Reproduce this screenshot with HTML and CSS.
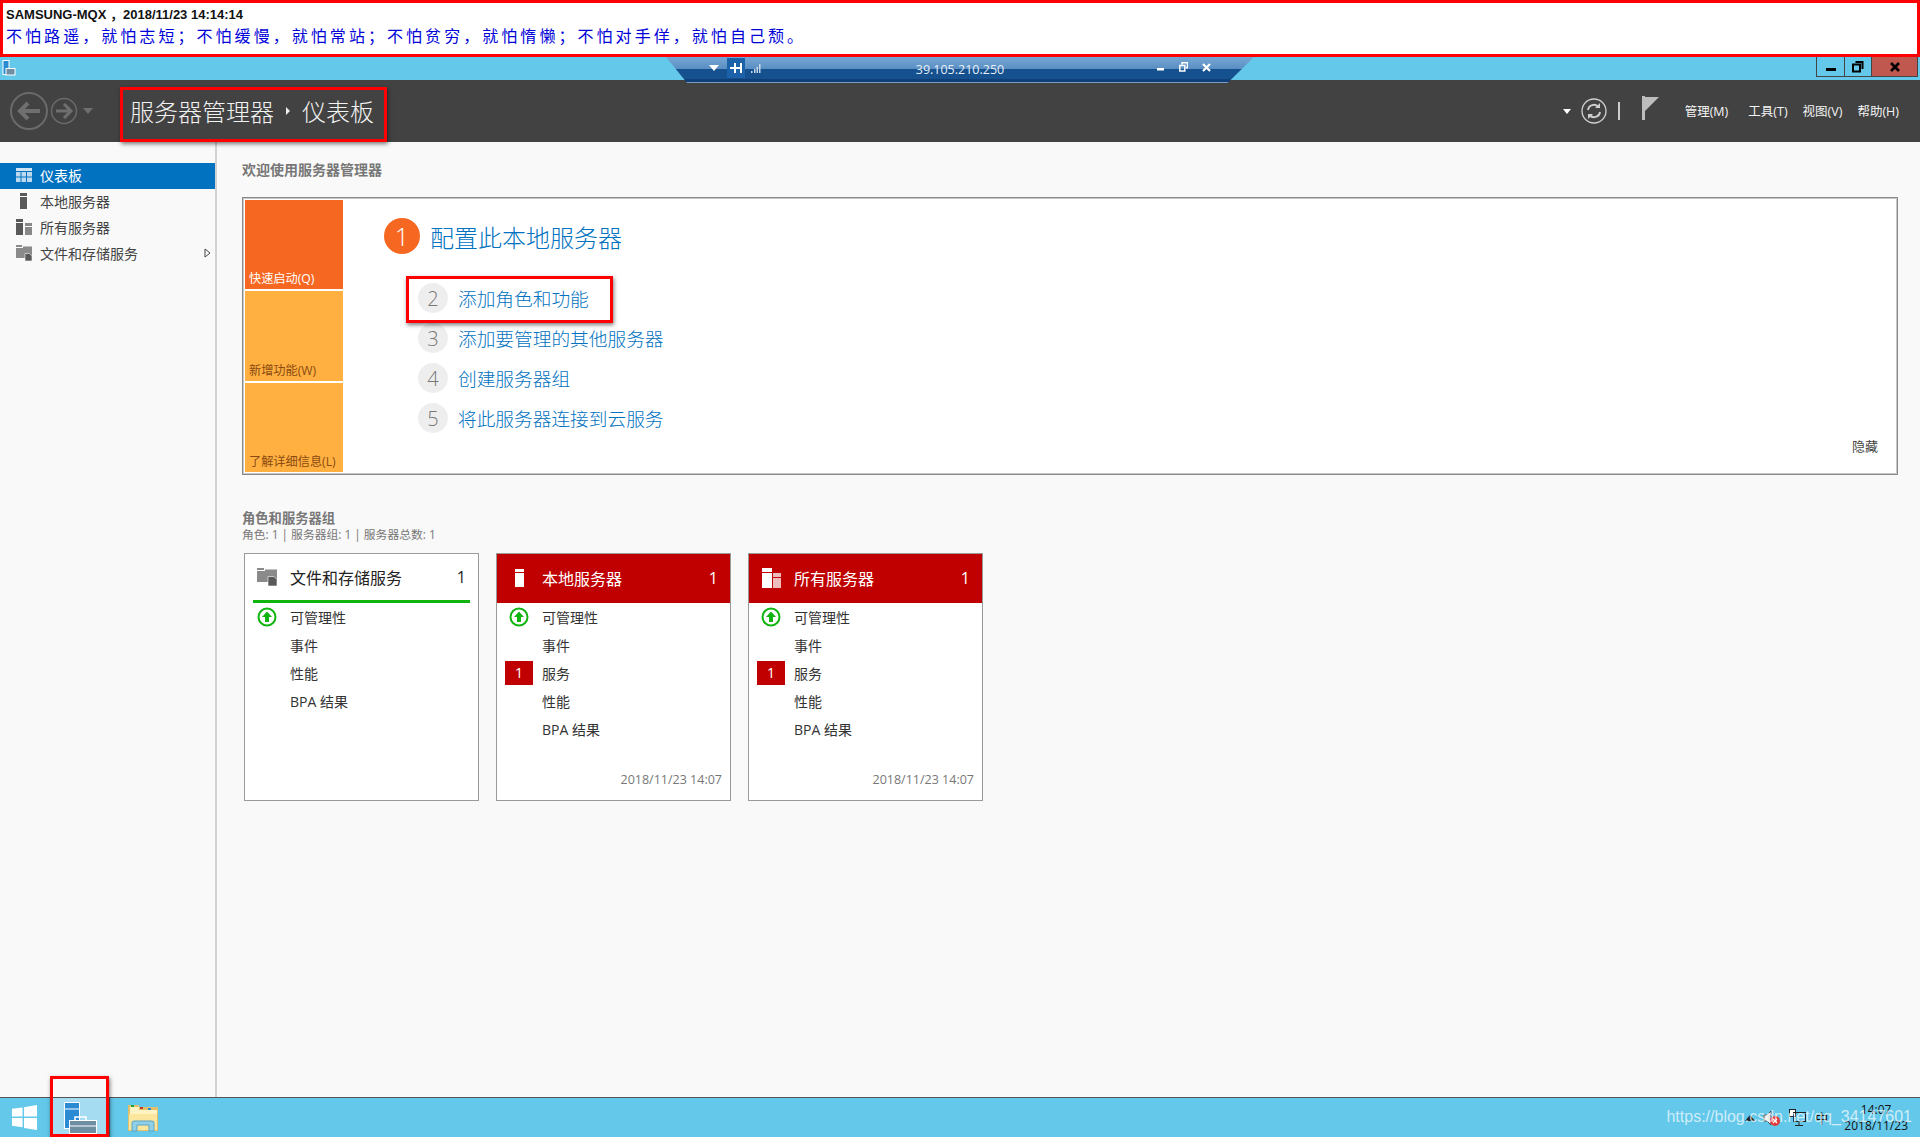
FILE: index.html
```html
<!DOCTYPE html>
<html lang="zh-CN">
<head>
    <meta charset="UTF-8">
    <title>服务器管理器</title>
    <link rel="stylesheet" href="styles.css">
</head>
<body>
    <div class="banner">
        <div class="banner-host">SAMSUNG-MQX ，2018/11/23 14:14:14</div>
        <div class="banner-motto">不怕路遥，就怕志短；不怕缓慢，就怕常站；不怕贫穷，就怕惰懒；不怕对手佯，就怕自己颓。</div>
    </div>

    <div class="titlebar">
        <svg class="app-icon" width="14" height="16" viewBox="0 0 14 16">
            <rect x="1" y="0.5" width="6" height="14" fill="#2a8ad4" stroke="#fff"/>
            <rect x="4" y="8.5" width="9" height="6.500" fill="#6f8ea3" stroke="#fff"/>
        </svg>
        <div class="window-btns">
            <div class="win-btn">
                <svg width="12" height="12" viewBox="0 0 12 12"><rect x="1" y="7" width="10" height="3" fill="#000"/></svg>
            </div>
            <div class="win-btn restore">
                <svg width="12" height="12" viewBox="0 0 12 12"><path d="M3.500 1h7v7M1 3.500h7v7H1z" fill="none" stroke="#000" stroke-width="2"/></svg>
            </div>
            <div class="win-btn close">
                <svg width="12" height="12" viewBox="0 0 12 12"><path d="M2 2l8 8M10 2l-8 8" stroke="#000" stroke-width="2.600"/></svg>
            </div>
        </div>
    </div>

    <div class="header">
        <div class="nav">
            <svg width="90" height="44" viewBox="0 0 90 44">
                <circle cx="19" cy="22" r="18" fill="none" stroke="#6a6a6a" stroke-width="2"/>
                <path d="M30 22H10M18 14l-8 8 8 8" fill="none" stroke="#6f6f6f" stroke-width="4"/>
                <circle cx="54" cy="22" r="12.500" fill="none" stroke="#6a6a6a" stroke-width="1.500"/>
                <path d="M46 22h15M54 15l7 7-7 7" fill="none" stroke="#6f6f6f" stroke-width="3"/>
                <path d="M73 19h10l-5 6z" fill="#6f6f6f"/>
            </svg>
        </div>
        <div class="crumb">
            <span>服务器管理器</span>
            <svg width="6" height="10" viewBox="0 0 6 10"><path d="M1 1l4 4-4 4z" fill="#eee"/></svg>
            <span>仪表板</span>
        </div>
        <div class="header-right">
            <svg width="8" height="5" viewBox="0 0 8 5"><path d="M0 0h8L4 5z" fill="#fff"/></svg>
            <svg class="refresh" width="26" height="26" viewBox="0 0 26 26">
                <circle cx="13" cy="13" r="12" fill="none" stroke="#cfcfcf" stroke-width="1.300"/>
                <path d="M7 12a6 6 0 0 1 10.500-3M19 14a6 6 0 0 1-10.500 3" fill="none" stroke="#cfcfcf" stroke-width="2"/>
                <path d="M19 5v5h-5zM7 21v-5h5z" fill="#cfcfcf"/>
            </svg>
            <div class="sep"></div>
            <svg class="flag" width="18" height="24" viewBox="0 0 18 24">
                <rect x="0" y="0" width="3" height="24" fill="#bdbdbd"/>
                <path d="M3 1h14L3 15z" fill="#bdbdbd"/>
            </svg>
            <div class="menu">
                <span class="menu-first">管理(M)</span>
                <span>工具(T)</span>
                <span>视图(V)</span>
                <span>帮助(H)</span>
            </div>
        </div>
    </div>

    <div class="main">
        <div class="sidebar">
            <div class="side-item active">
                <svg width="16" height="14" viewBox="0 0 16 14">
                    <rect width="16" height="3" fill="#cfe4f5"/>
                    <path d="M0 4h4.500v4.500H0zM5.500 4H10v4.500H5.500zM11 4h5v4.500h-5zM0 9.500h4.500V14H0zM5.500 9.500H10V14H5.500zM11 9.500h5V14h-5z" fill="#bcd9f0"/>
                </svg>
                <span>仪表板</span>
            </div>
            <div class="side-item">
                <svg width="16" height="16" viewBox="0 0 16 16">
                    <rect x="4" y="0" width="7" height="3" fill="#595959"/>
                    <rect x="4" y="4" width="7" height="12" fill="#595959"/>
                </svg>
                <span>本地服务器</span>
            </div>
            <div class="side-item">
                <svg width="16" height="16" viewBox="0 0 16 16">
                    <rect x="0" y="0" width="7" height="3" fill="#595959"/>
                    <rect x="0" y="4" width="7" height="12" fill="#595959"/>
                    <rect x="9" y="4" width="7" height="3" fill="#888"/>
                    <rect x="9" y="8" width="7" height="8" fill="#888"/>
                </svg>
                <span>所有服务器</span>
            </div>
            <div class="side-item">
                <svg width="16" height="16" viewBox="0 0 16 16">
                    <path d="M0 0h6v2H0zM7 1.500h9V13H0V3h7z" fill="#8a8a8a"/>
                    <path d="M9 8.500h4.500L16 11v5H9z" fill="#595959" stroke="#f9f9f9" stroke-width="0.600"/>
                </svg>
                <span>文件和存储服务</span>
                <svg class="side-arrow" width="7" height="10" viewBox="0 0 7 10"><path d="M1 1l5 4-5 4z" fill="#fff" stroke="#444"/></svg>
            </div>
        </div>

        <div class="content">
            <div class="welcome">欢迎使用服务器管理器</div>

            <div class="quick">
                <div class="tiles">
                    <div class="tile tile-start">快速启动(Q)</div>
                    <div class="tile">新增功能(W)</div>
                    <div class="tile">了解详细信息(L)</div>
                </div>
                <div class="steps">
                    <div class="step-head">
                        <div class="num-big">1</div>
                        <div class="step-title">配置此本地服务器</div>
                    </div>
                    <div class="step-list">
                        <div class="step"><div class="num">2</div>添加角色和功能</div>
                        <div class="step"><div class="num">3</div>添加要管理的其他服务器</div>
                        <div class="step"><div class="num">4</div>创建服务器组</div>
                        <div class="step"><div class="num">5</div>将此服务器连接到云服务</div>
                    </div>
                </div>
                <div class="hide-link">隐藏</div>
            </div>

            <div class="groups-title">角色和服务器组</div>
            <div class="groups-sub">角色: 1 | 服务器组: 1 | 服务器总数: 1</div>

            <div class="cards">
                <div class="card">
                    <div class="card-head ok">
                        <svg width="20" height="18" viewBox="0 0 20 18">
                            <path d="M0 0h7v2H0zM8 1.500h12V14H0V3h8z" fill="#8a8a8a"/>
                            <path d="M11 8.500h6l3 3V18h-9z" fill="#595959" stroke="#fff" stroke-width="0.600"/>
                        </svg>
                        <span class="card-name">文件和存储服务</span>
                        <span class="card-count">1</span>
                    </div>
                    <div class="card-body">
                        <div class="row">
                            <svg class="up" width="20" height="20" viewBox="0 0 20 20"><circle cx="10" cy="10" r="8.500" fill="#fff" stroke="#0fb40f" stroke-width="2"/><path d="M10 4.500L15 10h-3v5H8v-5H5z" fill="#0fb40f"/></svg>
                            <span>可管理性</span>
                        </div>
                        <div class="row"><span>事件</span></div>
                        <div class="row"><span>性能</span></div>
                        <div class="row"><span>BPA 结果</span></div>
                    </div>
                </div>

                <div class="card">
                    <div class="card-head alert">
                        <svg width="20" height="18" viewBox="0 0 20 18">
                            <rect x="5" y="0" width="9" height="3" fill="#fff"/>
                            <rect x="5" y="4" width="9" height="14" fill="#fff"/>
                        </svg>
                        <span class="card-name">本地服务器</span>
                        <span class="card-count">1</span>
                    </div>
                    <div class="card-body">
                        <div class="row">
                            <svg class="up" width="20" height="20" viewBox="0 0 20 20"><circle cx="10" cy="10" r="8.500" fill="#fff" stroke="#0fb40f" stroke-width="2"/><path d="M10 4.500L15 10h-3v5H8v-5H5z" fill="#0fb40f"/></svg>
                            <span>可管理性</span>
                        </div>
                        <div class="row"><span>事件</span></div>
                        <div class="row"><div class="flag-num">1</div><span>服务</span></div>
                        <div class="row"><span>性能</span></div>
                        <div class="row"><span>BPA 结果</span></div>
                    </div>
                    <div class="card-time">2018/11/23 14:07</div>
                </div>

                <div class="card">
                    <div class="card-head alert">
                        <svg width="20" height="20" viewBox="0 0 20 20">
                            <rect x="0" y="0" width="10" height="4" fill="#fff"/>
                            <rect x="0" y="5" width="10" height="15" fill="#fff"/>
                            <rect x="11" y="5" width="8" height="4" fill="#eebcbc"/>
                            <rect x="11" y="10" width="8" height="10" fill="#eebcbc"/>
                        </svg>
                        <span class="card-name">所有服务器</span>
                        <span class="card-count">1</span>
                    </div>
                    <div class="card-body">
                        <div class="row">
                            <svg class="up" width="20" height="20" viewBox="0 0 20 20"><circle cx="10" cy="10" r="8.500" fill="#fff" stroke="#0fb40f" stroke-width="2"/><path d="M10 4.500L15 10h-3v5H8v-5H5z" fill="#0fb40f"/></svg>
                            <span>可管理性</span>
                        </div>
                        <div class="row"><span>事件</span></div>
                        <div class="row"><div class="flag-num">1</div><span>服务</span></div>
                        <div class="row"><span>性能</span></div>
                        <div class="row"><span>BPA 结果</span></div>
                    </div>
                    <div class="card-time">2018/11/23 14:07</div>
                </div>
            </div>
        </div>
    </div>

    <div class="taskbar">
        <div class="task-btn start">
            <svg width="27" height="27" viewBox="0 0 28 28">
                <path d="M1 5l11-1.500V13H1zM13.500 3.300L27 1v12H13.500zM1 14.500h11V24L1 22.500zM13.500 14.500H27V27l-13.500-2z" fill="#fff"/>
            </svg>
        </div>
        <div class="task-btn current">
            <svg width="33" height="32" viewBox="0 0 33 32">
                <rect x="0.500" y="0.500" width="15" height="26" fill="#2a8ad4" stroke="#fff"/>
                <path d="M0.500 7h15" stroke="#fff"/>
                <path d="M11 18v-3h11v3" fill="none" stroke="#fff" stroke-width="1.500"/>
                <rect x="5.500" y="18.500" width="27" height="13" fill="#6f8ea3" stroke="#fff"/>
                <path d="M6 24h26" stroke="#fff"/>
            </svg>
        </div>
        <div class="task-btn folder">
            <svg width="32" height="29" viewBox="0 0 32 29">
                <path d="M1 2h11v2h19v24H1z" fill="#e3bf6a"/>
                <path d="M3 4h9v3h18v5H3z" fill="#fff3c4"/>
                <rect x="4" y="2" width="3" height="2" fill="#1aa63c"/>
                <rect x="13" y="4" width="3" height="2" fill="#c0392b"/>
                <rect x="21" y="5" width="3" height="2" fill="#2a8ad4"/>
                <path d="M2 11h28v16H2z" fill="#fbe69d"/>
                <path d="M5 28v-8a2 2 0 0 1 2-2h18a2 2 0 0 1 2 2v8h-5v-6H10v6z" fill="#8fd0e8" stroke="#5aa4c4"/>
            </svg>
        </div>
        <div class="tray">
            <svg width="10" height="6" viewBox="0 0 10 6"><path d="M5 0l5 6H0z" fill="#222"/></svg>
            <svg width="18" height="18" viewBox="0 0 18 18">
                <path d="M1 6h3l4-4v14l-4-4H1z" fill="#e8e8e8" stroke="#333" stroke-width="0.800"/>
                <circle cx="12" cy="12" r="5" fill="#e23a3a"/>
                <path d="M10 10l4 4M14 10l-4 4" stroke="#fff" stroke-width="1.200"/>
            </svg>
            <svg width="18" height="18" viewBox="0 0 18 18">
                <rect x="0.500" y="0.500" width="6" height="7" fill="#fff" stroke="#222"/>
                <rect x="4.500" y="3.500" width="12" height="9" fill="none" stroke="#222"/>
                <path d="M10 13v3M6 16.500h8" stroke="#222"/>
            </svg>
            <span class="tray-ime">中</span>
            <div class="clock">
                <span>14:07</span>
                <span>2018/11/23</span>
            </div>
        </div>
        <div class="watermark">https://blog.csdn.net/qq_34147601</div>
    </div>

    <!-- 远程桌面连接栏 -->
    <div class="rdp-bar">
        <svg width="10" height="6" viewBox="0 0 10 6"><path d="M0 0h10L5 6z" fill="#fff"/></svg>
        <div class="rdp-pin">
            <svg width="12" height="10" viewBox="0 0 12 10"><path d="M0 5h11M5 0v10M11 0v10" stroke="#fff" stroke-width="2"/></svg>
        </div>
        <svg width="10" height="10" viewBox="0 0 10 10"><path d="M0 8h1.500v2H0zM3 6h1.500v4H3zM5.500 4H7v6H5.500zM8 1h1.500v9H8z" fill="#c8d8ea"/></svg>
        <div class="rdp-ip">39.105.210.250</div>
        <div class="rdp-ctrl">
            <svg width="8" height="8" viewBox="0 0 8 8"><rect y="5" width="7" height="2.500" fill="#fff"/></svg>
            <svg width="9" height="10" viewBox="0 0 9 10"><path d="M3 2.500V.8h5.500v5H7M.8 3.500h5v5.500h-5z" fill="none" stroke="#fff" stroke-width="1.500"/></svg>
            <svg width="9" height="9" viewBox="0 0 9 9"><path d="M1 1l7 7M8 1L1 8" stroke="#fff" stroke-width="2.200"/></svg>
        </div>
    </div>

    <!-- 截图上的红色标注框 -->
    <div class="mark mark-crumb"></div>
    <div class="mark mark-step"></div>
    <div class="mark mark-task"></div>
</body>
</html>
```

FILE: styles.css
```css
* {
    box-sizing: border-box;
}
html, body {
    margin: 0;
    height: 1137px;
    overflow: hidden;
}
body {
    position: relative;
    display: flex;
    flex-direction: column;
    font-family: "Open Sans", "Noto Sans CJK SC", sans-serif;
    font-size: 13px;
    background: #f9f9f9;
    color: #333;
}

/* top banner */
.banner {
    height: 57px;
    border: 3px solid #f00;
    background: #fff;
    padding: 2px 3px 0;
}
.banner-host {
    font-family: "Liberation Sans", "Noto Sans CJK SC", sans-serif;
    font-size: 13px;
    font-weight: bold;
    line-height: 20px;
    color: #111;
}
.banner-motto {
    font-family: "Noto Sans CJK SC", sans-serif;
    font-size: 16px;
    letter-spacing: 3.050px;
    line-height: 20px;
    color: #0000d8;
}

/* window title bar */
.titlebar {
    height: 23px;
    background: #63c8ea;
    display: flex;
    justify-content: space-between;
    padding-left: 2px;
}
.app-icon {
    margin-top: 3px;
}
.window-btns {
    display: flex;
    height: 20px;
    margin-right: 2px;
    border: 1px solid #444;
    border-top: none;
}
.win-btn {
    width: 28px;
    display: flex;
    align-items: center;
    justify-content: center;
    border-right: 1px solid #444;
}
.win-btn.restore {
    width: 27px;
}
.win-btn.close {
    width: 45px;
    border-right: none;
    background: #c1584f;
}

/* dark header */
.header {
    height: 62px;
    background: #424242;
    display: flex;
    align-items: center;
    padding-left: 10px;
    color: #fff;
}
.nav {
    width: 120px;
    display: flex;
}
.crumb {
    display: flex;
    align-items: center;
    gap: 11px;
    margin-bottom: 1px;
    font-family: "Noto Sans CJK SC", sans-serif;
    font-size: 24px;
    font-weight: 300;
    color: #f2f2f2;
}
.header-right {
    margin-left: auto;
    display: flex;
    align-items: center;
    padding-right: 21px;
}
.refresh {
    margin-left: 10px;
}
.sep {
    width: 2px;
    height: 18px;
    margin: 0 22px 0 11px;
    background: #ccc;
}
.flag {
    margin-bottom: 6px;
}
.menu {
    display: flex;
    gap: 15px;
    margin: 0 0 1px 25px;
    font-size: 12.500px;
    color: #f4f4f4;
}
.menu-first {
    margin-right: 5px;
}

/* main area */
.main {
    flex: 1;
    display: flex;
    min-height: 0;
}
.sidebar {
    width: 217px;
    padding-top: 21px;
    border-right: 2px solid #d2d2d2;
}
.side-item {
    height: 26px;
    display: flex;
    align-items: center;
    gap: 8px;
    padding: 0 0 2px 16px;
    font-size: 14px;
    color: #444;
}
.side-item.active {
    background: #0072bf;
    color: #fff;
}
.side-arrow {
    margin-left: auto;
    margin-right: 4px;
}
.content {
    flex: 1;
    padding: 18px 0 0 25px;
}
.welcome {
    font-size: 14px;
    font-weight: bold;
    color: #777;
    line-height: 20px;
}

/* quick start box */
.quick {
    position: relative;
    width: 1656px;
    height: 278px;
    margin-top: 17px;
    display: flex;
    border: 1px solid #8a8a8a;
    outline: 1px solid #c8c8c8;
    outline-offset: -2px;
    background: #fff;
    padding: 2px;
}
.tiles {
    width: 98px;
    display: flex;
    flex-direction: column;
    gap: 2px;
}
.tile {
    flex: 1;
    display: flex;
    align-items: flex-end;
    padding: 0 0 2px 4px;
    background: #ffb040;
    font-size: 12.200px;
    color: #8a4a12;
}
.tile-start {
    background: #f66722;
    color: #fff;
}
.steps {
    margin-left: 41px;
}
.step-head {
    display: flex;
    align-items: center;
    gap: 10px;
    margin-top: 18px;
}
.num-big {
    width: 36px;
    height: 36px;
    border-radius: 50%;
    background: #f66722;
    color: #fff;
    font-size: 25px;
    font-weight: 300;
    display: flex;
    align-items: center;
    justify-content: center;
}
.step-title {
    font-size: 24px;
    font-weight: 300;
    color: #0072bf;
}
.step-list {
    margin: 28px 0 0 34px;
    display: flex;
    flex-direction: column;
    gap: 10px;
}
.step {
    height: 30px;
    display: flex;
    align-items: center;
    gap: 10px;
    font-size: 18.700px;
    font-weight: 300;
    color: #0072bf;
}
.num {
    width: 30px;
    height: 30px;
    margin-top: 2px;
    border-radius: 50%;
    background: #eee;
    color: #777;
    font-size: 20px;
    display: flex;
    align-items: center;
    justify-content: center;
}
.hide-link {
    position: absolute;
    right: 19px;
    bottom: 19px;
    font-size: 13px;
    color: #444;
}

/* role groups */
.groups-title {
    margin-top: 34px;
    font-size: 13.300px;
    font-weight: bold;
    line-height: 18px;
    color: #777;
}
.groups-sub {
    font-size: 11.800px;
    line-height: 15px;
    color: #777;
}
.cards {
    display: flex;
    gap: 17px;
    margin: 11px 0 0 2px;
}
.card {
    position: relative;
    width: 235px;
    height: 248px;
    border: 1px solid #9a9a9a;
    background: #fff;
}
.card-head {
    height: 49px;
    display: flex;
    align-items: center;
    padding: 0 12px 2px 13px;
    font-size: 16px;
}
.card-head.ok {
    margin: 0 8px;
    padding: 0 4px;
    border-bottom: 3px solid #0fb40f;
    color: #222;
}
.card-head.alert {
    background: #c00000;
    color: #fff;
}
.card-name {
    margin-left: 12px;
}
.card-head.ok .card-name {
    margin-left: 13px;
}
.card-count {
    margin-left: auto;
}
.row {
    position: relative;
    height: 28px;
    display: flex;
    align-items: center;
    padding-left: 45px;
    font-size: 14px;
    color: #333;
}
.up {
    position: absolute;
    left: 12px;
    top: 4px;
}
.flag-num {
    position: absolute;
    left: 8px;
    top: 2px;
    width: 28px;
    height: 24px;
    background: #c00000;
    color: #fff;
    text-align: center;
    line-height: 24px;
}
.card-time {
    position: absolute;
    right: 8px;
    bottom: 12px;
    font-size: 12.500px;
    color: #777;
}

/* taskbar */
.taskbar {
    position: relative;
    height: 40px;
    display: flex;
    background: #63c8ea;
    border-top: 1px solid #555;
}
.task-btn {
    width: 60px;
    display: flex;
    align-items: center;
    justify-content: center;
}
.task-btn.start {
    width: 52px;
    padding-right: 3px;
}
.task-btn.current {
    width: 58px;
    background: #a6dcf1;
    border-right: 1px solid #4a6c7a;
}
.task-btn.folder {
    width: 66px;
}
.tray {
    margin-left: auto;
    display: flex;
    align-items: center;
    gap: 8px;
    padding-right: 12px;
    color: #111;
}
.tray-ime {
    font-family: "Noto Sans CJK SC", sans-serif;
    font-size: 13px;
}
.clock {
    display: flex;
    flex-direction: column;
    align-items: center;
    margin-left: 8px;
    font-size: 12px;
    line-height: 16px;
}
.watermark {
    position: absolute;
    right: 8px;
    top: 10px;
    font-family: "Liberation Sans", sans-serif;
    font-size: 16px;
    color: rgba(255, 255, 255, 0.7);
}

/* rdp connection bar */
.rdp-bar {
    position: absolute;
    left: 666px;
    top: 57px;
    width: 588px;
    height: 26px;
    display: flex;
    align-items: center;
    gap: 6px;
    padding: 0 0 4px 43px;
    clip-path: polygon(0 0, 100% 0, 95.500% 100%, 3.600% 100%);
    background: linear-gradient(#78a6d2, #5a8fc4 45%, #15508f 46%, #15508f 85%, #0f3f78 86%, #0f3f78 95%, #7d9cc4 96%);
    color: #e6eef8;
}
.rdp-pin {
    width: 18px;
    height: 20px;
    display: flex;
    align-items: center;
    justify-content: center;
    margin-left: 2px;
    background: #1c62a8;
}
.rdp-ip {
    position: absolute;
    left: 0;
    right: 0;
    top: 4px;
    text-align: center;
    font-size: 12.500px;
}
.rdp-ctrl {
    position: absolute;
    right: 43px;
    top: 5px;
    display: flex;
    align-items: center;
    gap: 14px;
}

/* red annotation boxes */
.mark {
    position: absolute;
    border: 3px solid #f00;
    box-shadow: 1px 2px 4px rgba(0, 0, 0, 0.5);
}
.mark-crumb {
    left: 120px;
    top: 87px;
    width: 267px;
    height: 55px;
}
.mark-step {
    left: 406px;
    top: 276px;
    width: 207px;
    height: 47px;
}
.mark-task {
    left: 50px;
    top: 1076px;
    width: 59px;
    height: 61px;
}
```
